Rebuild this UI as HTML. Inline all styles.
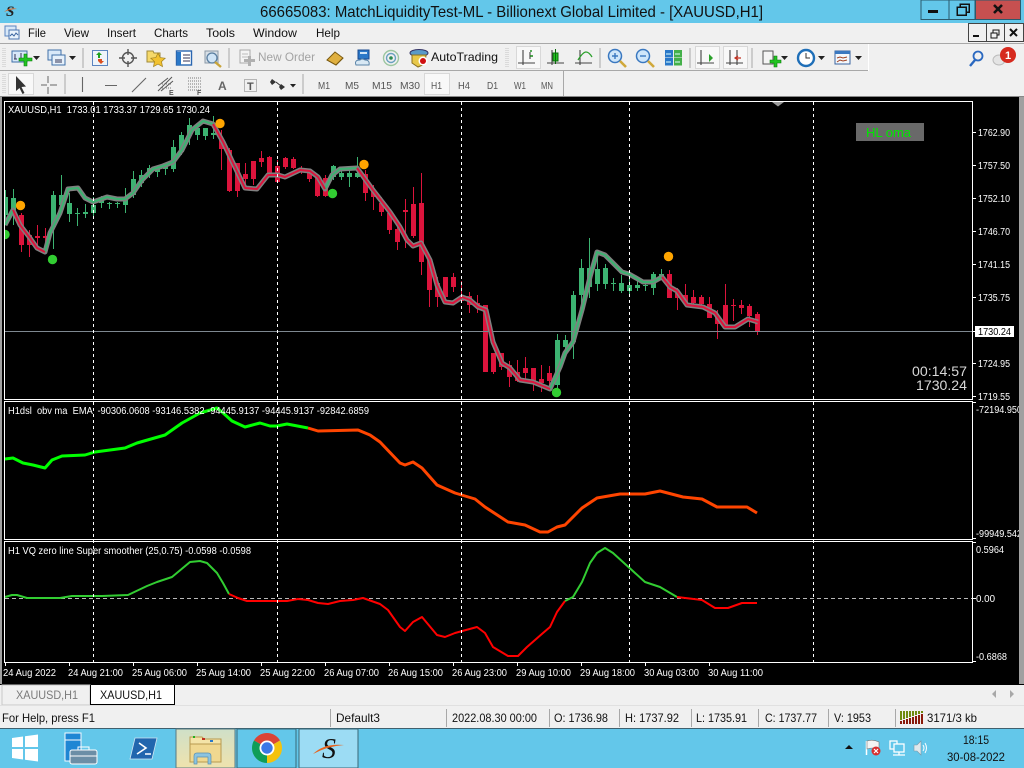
<!DOCTYPE html>
<html><head><meta charset="utf-8"><title>MT4</title>
<style>
html,body{margin:0;padding:0;background:#f0f0f0;overflow:hidden}
svg{display:block}
text{font-family:"Liberation Sans",sans-serif;font-size:11px;white-space:pre}
.w text{fill:#fff;font-size:10px}
.k text{fill:#111;font-size:12px}
.tf text{fill:#555;font-size:10.5px}
.c{shape-rendering:crispEdges}
</style></head><body>
<svg width="1024" height="768" viewBox="0 0 1024 768" xmlns="http://www.w3.org/2000/svg">
<defs><clipPath id="cl"><rect x="5" y="102" width="967" height="297"/></clipPath>
<linearGradient id="fg" x1="0" y1="0" x2="0" y2="1"><stop offset="0" stop-color="#cfe0c8"/><stop offset="1" stop-color="#efe2ad"/></linearGradient></defs>

<!-- backgrounds -->
<rect width="1024" height="768" fill="#f0f0f0"/>
<rect width="1024" height="23" fill="#63c7ea"/>
<rect x="0" y="97" width="1024" height="587" fill="#000"/>
<rect x="0" y="97" width="2" height="588" fill="#a0a0a0"/>
<rect x="1019" y="97" width="5" height="588" fill="#a0a0a0"/>

<!-- title bar -->
<text x="260" y="17" textLength="503" lengthAdjust="spacingAndGlyphs" style="font-size:16px" fill="#111">66665083: MatchLiquidityTest-ML - Billionext Global Limited - [XAUUSD,H1]</text>
<text x="6" y="16" style="font-family:'Liberation Serif',serif;font-size:15px;font-style:italic;font-weight:bold" fill="#222">S</text>
<path d="M4 12Q10 7 17 9Q10 9 4 12z" fill="#e8641e"/>
<g class="c">
<rect x="921" y="0" width="28" height="19.5" fill="#63c7ea" stroke="#2b5a6c"/>
<rect x="949" y="0" width="26" height="19.5" fill="#63c7ea" stroke="#2b5a6c"/>
<rect x="975.5" y="0" width="45" height="19.5" fill="#c75050" stroke="#2b5a6c"/>
<rect x="928" y="10" width="10" height="3" fill="#111"/>
<rect x="960" y="4" width="9" height="8" fill="none" stroke="#111" stroke-width="1.5"/>
<rect x="957" y="7" width="9" height="8" fill="#63c7ea" stroke="#111" stroke-width="1.5"/>
</g>
<path d="M994 5l8 8M1002 5l-8 8" stroke="#111" stroke-width="2.6"/>

<!-- menu -->
<g>
<rect x="5" y="26" width="11" height="10" fill="#d8e8f8" stroke="#5a84c0"/>
<rect x="9" y="30" width="10" height="9" fill="#eaf3fc" stroke="#4a74b0"/>
<path d="M10 36l2-2 2 2 2-3 2 2" stroke="#3a64a0" fill="none"/>
</g>
<g class="k">
<text x="28" y="37" textLength="18" lengthAdjust="spacingAndGlyphs">File</text>
<text x="64" y="37" textLength="25" lengthAdjust="spacingAndGlyphs">View</text>
<text x="107" y="37" textLength="29" lengthAdjust="spacingAndGlyphs">Insert</text>
<text x="154" y="37" textLength="34" lengthAdjust="spacingAndGlyphs">Charts</text>
<text x="206" y="37" textLength="29" lengthAdjust="spacingAndGlyphs">Tools</text>
<text x="253" y="37" textLength="44" lengthAdjust="spacingAndGlyphs">Window</text>
<text x="316" y="37" textLength="24" lengthAdjust="spacingAndGlyphs">Help</text>
</g>
<g class="c">
<rect x="968.5" y="23.5" width="18" height="18" fill="#f0f0f0" stroke="#444"/>
<rect x="986.5" y="23.5" width="18" height="18" fill="#f0f0f0" stroke="#444"/>
<rect x="1004.5" y="23.5" width="19" height="18" fill="#f0f0f0" stroke="#444"/>
<rect x="973" y="35" width="6" height="2" fill="#111"/>
<rect x="993" y="30" width="6" height="5" fill="none" stroke="#111"/>
<rect x="991" y="33" width="6" height="5" fill="#f0f0f0" stroke="#111"/>
</g>
<path d="M1010 29l7 7M1017 29l-7 7" stroke="#111" stroke-width="2"/>

<!-- toolbar separators -->
<g class="c">
<rect x="0" y="43" width="1024" height="1" fill="#a8a8a8"/>
<rect x="0" y="70" width="868" height="1" fill="#a8a8a8"/>
<rect x="868" y="44" width="1" height="27" fill="#fff"/>
<rect x="563" y="71" width="1" height="26" fill="#a8a8a8"/>
<rect x="0" y="96" width="1024" height="1" fill="#888"/>
<path d="M83 48v20M229 48v20M600 48v20M690 48v20M752 48v20M65 74v20M303 74v20" stroke="#a8a8a8"/>
<path d="M506 48v20M508 48v20M3 48v20M5 48v20M3 74v20M5 74v20" stroke="#c4c4c4" stroke-dasharray="1 1"/>
<g fill="#f8f8f8" stroke="#d8d8d8">
<rect x="516.5" y="46.5" width="24" height="22"/><rect x="695.5" y="46.5" width="24" height="22"/><rect x="723.5" y="46.5" width="24" height="22"/>
<rect x="8.5" y="73.5" width="25" height="21"/><rect x="424.5" y="73.5" width="25" height="21"/>
</g>
</g>

<!-- toolbar 1 icons -->
<rect x="12" y="51" width="15" height="11" fill="#d8e8f8" stroke="#3f6fa8"/>
<path d="M15 54v5M14 59h3M21 53v6" stroke="#335" fill="none"/>
<path d="M20 55h5v-4h3v4h5v3h-5v5h-3v-5h-5z" transform="translate(-1,3)" fill="#22c422" stroke="#0a7a0a" stroke-width=".6"/>
<path d="M33 56h7l-3.5 4z" fill="#222"/>
<rect x="48" y="50" width="13" height="10" fill="#d8e8f8" stroke="#3f6fa8"/>
<rect x="52" y="55" width="13" height="10" fill="#e6f0fa" stroke="#3f6fa8"/>
<path d="M55 60h7M55 62h7" stroke="#335"/>
<path d="M69 56h7l-3.5 4z" fill="#222"/>
<rect x="92.5" y="50.5" width="15" height="15" fill="#eef4fa" stroke="#5a84c0"/>
<path d="M96 55l3-3 3 3h-2v3h-2v-3z" fill="#1ea01e"/><path d="M98 59h4v2h2l-3 3-3-3h0z" fill="#dc5020"/>
<g fill="none" stroke="#555" stroke-width="1.4"><circle cx="128" cy="58" r="5.5"/><path d="M128 49v6M128 61v6M119 58h6M131 58h6"/></g>
<path d="M147 51h6l1 2h6v9h-13z" fill="#f6d96a" stroke="#a08a3a"/>
<path d="M158 53l2.2 4.6 5 .6-3.7 3.400 1 5-4.500-2.500-4.500 2.500 1-5-3.700-3.400 5-.6z" fill="#f2c230" stroke="#a08020" stroke-width=".7"/>
<rect x="176.5" y="51" width="15" height="14" fill="#fff" stroke="#2a66b0" stroke-width="1.4"/><rect x="177" y="52" width="4" height="13" fill="#2a78c8"/><path d="M183 55h7M183 58h7M183 61h7" stroke="#335"/>
<rect x="205" y="51" width="13" height="12" fill="#d8dfe6" stroke="#8a98a6"/>
<circle cx="212" cy="58" r="5" fill="#cfe4f6" stroke="#5a7ea0" stroke-width="1.3"/><path d="M215 62l6 5" stroke="#c9a43a" stroke-width="2.4"/>
<rect x="240" y="50" width="10" height="13" fill="#f4f4f4" stroke="#aaa"/><path d="M242 54h6M242 57h6" stroke="#bbb"/><path d="M244 59h4v-3h3v3h4v3h-4v4h-3v-4h-4z" fill="#b0b0b0"/>
<text x="258" y="61" textLength="57" lengthAdjust="spacingAndGlyphs" style="font-size:12px" fill="#a3a3a3">New Order</text>
<path d="M327 60l8-8 8 6-7 7z" fill="#e0b040" stroke="#7a5a10"/><path d="M327 60l9 5 7-7" fill="none" stroke="#7a5a10"/>
<rect x="358" y="50" width="11" height="9" fill="#2a78c8" stroke="#1a4a90"/><rect x="360" y="52" width="7" height="2" fill="#cfe4f6"/>
<path d="M356 65q-2-5 4-5q2-2 5 0q5 0 4 5z" fill="#d8e8f4" stroke="#5a84a8"/>
<g fill="none"><circle cx="391" cy="58" r="7.500" stroke="#9cc6a0" stroke-width="1.400"/><circle cx="391" cy="58" r="4.500" stroke="#6aa0c0" stroke-width="1.400"/></g><circle cx="391" cy="58" r="1.800" fill="#2a8a50"/>
<ellipse cx="419" cy="53" rx="9" ry="3.500" fill="#5a9ac8" stroke="#336"/>
<path d="M412 55h14l-1 9-7 3-6-4z" fill="#e8c84a" stroke="#8a7020"/>
<circle cx="423" cy="61" r="4.500" fill="#fff"/><circle cx="423" cy="61" r="3" fill="#d01010"/>
<text x="431" y="61" textLength="67" lengthAdjust="spacingAndGlyphs" style="font-size:12px" fill="#111">AutoTrading</text>
<g fill="none" stroke="#444" stroke-width="1.100">
<path d="M523 50v15M518 63h17M530 52v7"/><path d="M552 50v15M547 63h17"/><path d="M580 50v15M575 63h17"/>
<path d="M701 50v15M697 63h17"/><path d="M730 50v15M726 63h17"/><path d="M737 50v15"/>
</g>
<path d="M530 56h3M531 52v-2" stroke="#1a8a1a" fill="none" stroke-width="1.400"/>
<rect x="553" y="53" width="5" height="8" fill="#22c422" stroke="#0a6a0a"/><path d="M555.500 49v15" stroke="#0a6a0a"/>
<path d="M578 60q5-8 8-8t6 5" fill="none" stroke="#2aa02a" stroke-width="1.300"/>
<path d="M709 54l4 4-4 4z" fill="#2aa02a"/><path d="M741 58h-5M738 56l-3 2 3 2" stroke="#c03020" fill="none" stroke-width="1.200"/>
<circle cx="615" cy="56" r="6.500" fill="#cfe6fa" stroke="#3a78c0" stroke-width="1.500"/><path d="M612 56h6M615 53v6" stroke="#3a78c0" stroke-width="1.400"/><path d="M620 61l6 6" stroke="#d0a83a" stroke-width="2.600"/>
<circle cx="643" cy="56" r="6.500" fill="#cfe6fa" stroke="#3a78c0" stroke-width="1.500"/><path d="M640 56h6" stroke="#3a78c0" stroke-width="1.400"/><path d="M648 61l6 6" stroke="#d0a83a" stroke-width="2.600"/>
<g class="c"><rect x="665" y="50" width="8" height="7.500" fill="#2a78c8"/><rect x="674" y="50" width="8" height="7.500" fill="#44b04a"/><rect x="665" y="58" width="8" height="7.500" fill="#2a78c8"/><rect x="674" y="58" width="8" height="7.500" fill="#44b04a"/><path d="M666 54h5M675 54h5M666 62h5M675 62h5" stroke="#dff"/></g>
<rect x="763" y="51" width="10" height="13" fill="#f4f4f4" stroke="#555"/><path d="M770 60h4v-4h3v4h4v3h-4v4h-3v-4h-4z" fill="#22c422" stroke="#0a7a0a" stroke-width=".6"/>
<path d="M781 56h7l-3.500 4z" fill="#222"/>
<circle cx="806" cy="58" r="8" fill="#fff" stroke="#1f6fb8" stroke-width="2.400"/><path d="M806 53v5h4" stroke="#333" fill="none"/>
<path d="M818 56h7l-3.500 4z" fill="#222"/>
<rect x="835" y="51" width="15" height="13" fill="#f4f8fc" stroke="#3a64a0"/><rect x="835" y="51" width="15" height="3" fill="#3a78c0"/><path d="M837 58l3-1 3 1 4-1M837 62l3-2 3 1 4-1" stroke="#a04020" fill="none"/>
<path d="M855 56h7l-3.500 4z" fill="#222"/>
<circle cx="978" cy="56" r="4.500" fill="none" stroke="#2a68c0" stroke-width="1.800"/><path d="M975 60l-5 6" stroke="#2a68c0" stroke-width="2.400"/>
<ellipse cx="999" cy="60" rx="6" ry="5" fill="#e4e4e4" stroke="#bbb"/>
<circle cx="1008" cy="55" r="8" fill="#d62a1e"/><text x="1005" y="59" style="font-size:11px;font-weight:bold" fill="#fff">1</text>

<!-- toolbar 2 icons -->
<path d="M16 76v15l3.500-3 3 6 2-1-3-6 4.500-.5z" fill="#333"/>
<path d="M48 76v7M48 87v7M41 85h6M50 85h7" stroke="#666" stroke-width="1"/>
<path d="M82.500 77v15M105 85.500h12M132 92l14-14" stroke="#666" stroke-width="1.100" fill="none"/>
<path d="M158 91l14-14M161 91l12-10M158 86l10-8" stroke="#555" fill="none"/>
<path d="M160 84h12M160 88h12" stroke="#777" stroke-dasharray="1 1"/><text x="169" y="95" style="font-size:7px;font-weight:bold" fill="#555">E</text>
<path d="M188 78h13M188 81h13M188 84h13M188 87h13M188 90h13" stroke="#777" stroke-dasharray="1 1"/><text x="197" y="95" style="font-size:7px;font-weight:bold" fill="#555">F</text>
<text x="218" y="90" style="font-size:12px;font-weight:bold" fill="#666">A</text>
<rect x="244.500" y="79.500" width="12" height="12" fill="none" stroke="#777" stroke-dasharray="1 1"/><text x="247" y="90" style="font-size:11px;font-weight:bold" fill="#555">T</text>
<path d="M272 79l4 3-4 3-2-3zM281 84l4 3-4 3-2-3z" fill="#333"/><path d="M276 82l5 4" stroke="#333"/>
<path d="M290 84h6l-3 3.500z" fill="#222"/>
<g class="tf">
<text x="318" y="89" textLength="12" lengthAdjust="spacingAndGlyphs">M1</text><text x="345" y="89" textLength="14" lengthAdjust="spacingAndGlyphs">M5</text><text x="372" y="89" textLength="20" lengthAdjust="spacingAndGlyphs">M15</text><text x="400" y="89" textLength="20" lengthAdjust="spacingAndGlyphs">M30</text>
<text x="431" y="89" textLength="11" lengthAdjust="spacingAndGlyphs">H1</text><text x="458" y="89" textLength="12" lengthAdjust="spacingAndGlyphs">H4</text><text x="487" y="89" textLength="11" lengthAdjust="spacingAndGlyphs">D1</text><text x="514" y="89" textLength="12" lengthAdjust="spacingAndGlyphs">W1</text><text x="541" y="89" textLength="12" lengthAdjust="spacingAndGlyphs">MN</text>
</g>

<!-- candles -->
<g clip-path="url(#cl)" class="c">
<path stroke="#3cb371" stroke-width="1" fill="none" d="M5.500 190V220M13.500 189V225M53.500 191V249M61.500 175V210M69.500 193V222M77.500 208V226M85.500 204V218M93.500 197V217M101.500 196V208M109.500 202V209M117.500 202V208M125.500 188V213M133.500 171V198M141.500 170V187M149.500 165V178M157.500 167V177M165.500 163V175M173.500 140V172M181.500 132V155M189.500 118V145M197.500 123V140M205.500 128V140M213.500 116V139M333.500 165V180M341.500 170V180M349.500 168V187M357.500 157V178M557.500 334V390M565.500 335V357M573.500 291V359M581.500 259V307M589.500 238V298M597.500 252V291M605.500 264V289M613.500 278V291M621.500 275V293M629.500 270V297M637.500 280V291M645.500 280V291M653.500 272V295M661.500 269V280"/>
<path fill="#3cb371" d="M5 197h3v18h-3zM11 198h5v12h-5zM51 195h5v32h-5zM59 195h5v10h-5zM67 203h5v11h-5zM75 213h5v1h-5zM83 212h5v2h-5zM91 205h5v8h-5zM99 198h5v5h-5zM107 203h5v1h-5zM115 203h5v1h-5zM123 200h5v5h-5zM131 179h5v16h-5zM139 175h5v8h-5zM147 168h5v4h-5zM155 169h5v3h-5zM163 166h5v3h-5zM171 147h5v22h-5zM179 135h5v17h-5zM187 125h5v10h-5zM195 128h5v7h-5zM203 128h5v8h-5zM211 133h5v2h-5zM331 166h5v11h-5zM339 173h5v4h-5zM347 173h5v4h-5zM355 173h5v4h-5zM555 340h5v45h-5zM563 340h5v7h-5zM571 295h5v47h-5zM579 268h5v27h-5zM587 268h5v19h-5zM595 269h5v15h-5zM603 268h5v16h-5zM611 283h5v1h-5zM619 283h5v8h-5zM627 285h5v6h-5zM635 285h5v3h-5zM643 285h5v1h-5zM651 274h5v14h-5zM659 274h5v6h-5z"/>
<path stroke="#dc143c" stroke-width="1" fill="none" d="M21.500 213V252M29.500 230V257M37.500 225V247M45.500 228V250M221.500 130V170M229.500 148V192M237.500 163V197M245.500 163V185M253.500 161V185M261.500 151V167M269.500 156V175M277.500 160V182M285.500 157V169M293.500 157V169M301.500 166V174M309.500 170V182M317.500 175V197M325.500 175V197M365.500 170V201M373.500 185V210M381.500 197V216M389.500 210V234M397.500 222V250M405.500 199V248M413.500 187V238M421.500 173V275M429.500 255V307M437.500 277V307M445.500 277V299M453.500 273V292M461.500 281V303M469.500 292V313M477.500 295V313M485.500 305V372M493.500 353V374M501.500 353V370M509.500 361V387M517.500 360V382M525.500 357V382M533.500 368V391M541.500 365V392M549.500 366V387M669.500 270V298M677.500 288V310M685.500 284V304M693.500 290V305M701.500 295V305M709.500 297V318M717.500 310V339M725.500 284V325M733.500 299V321M741.500 300V314M749.500 304V327M757.500 312V335"/>
<path fill="#dc143c" d="M19 215h5v30h-5zM27 235h5v10h-5zM35 236h5v2h-5zM43 236h5v2h-5zM219 140h5v9h-5zM227 150h5v41h-5zM235 163h5v28h-5zM243 174h5v5h-5zM251 161h5v18h-5zM259 158h5v4h-5zM267 157h5v16h-5zM275 166h5v16h-5zM283 158h5v9h-5zM291 159h5v9h-5zM299 168h5v4h-5zM307 173h5v6h-5zM315 177h5v19h-5zM323 178h5v18h-5zM363 174h5v19h-5zM371 190h5v7h-5zM379 203h5v9h-5zM387 213h5v17h-5zM395 229h5v13h-5zM403 210h5v2h-5zM411 204h5v32h-5zM419 203h5v59h-5zM427 260h5v30h-5zM435 283h5v14h-5zM443 277h5v20h-5zM451 277h5v10h-5zM459 297h5v4h-5zM467 296h5v9h-5zM475 303h5v3h-5zM483 305h5v67h-5zM491 353h5v19h-5zM499 353h5v14h-5zM507 365h5v12h-5zM515 372h5v9h-5zM523 368h5v5h-5zM531 368h5v14h-5zM539 379h5v4h-5zM547 373h5v8h-5zM667 274h5v24h-5zM675 293h5v5h-5zM683 295h5v7h-5zM691 297h5v6h-5zM699 297h5v7h-5zM707 304h5v14h-5zM715 317h5v7h-5zM723 305h5v20h-5zM731 305h5v1h-5zM739 305h5v3h-5zM747 306h5v10h-5zM755 314h5v18h-5z"/>
</g>
<rect x="5" y="331" width="967" height="1" fill="#7e8890"/>
<!-- moving average -->
<g clip-path="url(#cl)" fill="none" stroke-linejoin="round">
<path stroke="#808080" stroke-width="5" d="M5 225L13 210L20 225L30 238L37 248L45 252L50 233L60 213L68 189L78 188L85 198L93 202L107 197L117 199L125 199L133 193L142 180L153 169L163 166L173 162L182 150L192 130L203 121L213 124L223 142L233 163L245 188L257 189L268 175L278 175L285 177L300 170L310 171L318 177L325 189L332 175L340 169L357 168L373 190L390 212L400 227L407 240L413 246L421 243L430 260L437 285L445 302L453 303L462 297L470 300L478 307L486 310L493 342L502 363L510 368L520 380L533 382L550 389L560 367L565 353L573 342L582 310L590 277L597 252L605 255L622 272L629 274L643 282L653 282L662 277L670 287L677 291L687 305L703 307L715 313L725 327L735 327L748 319L758 322"/>
<path stroke="#3cb371" stroke-width="2" d="M5 225L13 210M45 252L50 233L60 213L68 189L78 188L85 198L93 202L107 197L117 199L125 199L133 193L142 180L153 169L163 166L173 162L182 150L192 130L203 121L213 124M325 189L332 175L340 169L357 168M550 389L560 367L565 353L573 342L582 310L590 277L597 252L605 255L622 272L629 274L643 282L653 282L662 277"/>
<path stroke="#dc143c" stroke-width="2" d="M13 210L20 225L30 238L37 248L45 252M213 124L223 142L233 163L245 188L257 189L268 175L278 175L285 177L300 170L310 171L318 177L325 189M357 168L373 190L390 212L400 227L407 240L413 246L421 243L430 260L437 285L445 302L453 303L462 297L470 300L478 307L486 310L493 342L502 363L510 368L520 380L533 382L550 389M662 277L670 287L677 291L687 305L703 307L715 313L725 327L735 327L748 319L758 322"/>
<g fill="#ffa500"><circle cx="20.500" cy="205.500" r="4.700"/><circle cx="220" cy="123.500" r="4.700"/><circle cx="364" cy="164.500" r="4.700"/><circle cx="668.500" cy="256.500" r="4.700"/></g>
<g fill="#32cd32"><circle cx="5" cy="234.500" r="4.700"/><circle cx="52.500" cy="259.500" r="4.700"/><circle cx="332.500" cy="193.500" r="4.700"/><circle cx="556.500" cy="392.500" r="4.700"/></g>
</g>

<!-- OBV indicator -->
<g fill="none" stroke-width="3" stroke-linejoin="round">
<path stroke="#00ff00" d="M5 459L13 458L23 463L33 465L45 468L52 460L62 456L85 455L95 452L125 448L137 443L165 435L182 423L200 413L217 408L222 412L232 421L245 427L260 423L270 426L277 426L287 424L308 428"/>
<path stroke="#ff4500" d="M308 428L318 431L358 430L370 435L380 442L400 463L405 465L413 462L422 468L437 485L455 493L475 499L485 507L508 522L525 525L540 532L548 532L557 527L565 525L582 508L597 498L620 494L645 494L660 491L683 497L702 499L717 507L747 507L757 513"/>
</g>
<!-- VQ indicator -->
<path d="M5 598.500H972" stroke="#b8b8b8" stroke-dasharray="4 3" class="c"/>
<g fill="none" stroke-width="2" stroke-linejoin="round">
<path stroke="#32cd32" d="M5 597L12 595L17 595L27 598L60 598L72 596L102 596L128 595L147 586L157 582L172 577L190 562L200 561L207 563L217 573L223 583L229 594M565 601L573 597L582 582L590 563L597 553L605 548L613 553L645 582L660 587L677 597"/>
<path stroke="#ff0000" d="M229 594L238 598L247 601L287 601L298 599L308 600L318 603L328 604L340 601L353 600L363 598L380 604L388 610L400 627L405 631L413 622L422 617L437 635L445 637L455 633L477 627L485 633L493 647L508 656L518 656L527 647L543 633L550 627L557 612L565 601M677 597L702 600L715 608L728 608L742 603L757 603"/>
</g>

<!-- dashed grid -->
<path class="c" d="M93.500 102V662M277.500 102V662M461.500 102V662M629.500 102V662M813.500 102V662" stroke="#fff" stroke-dasharray="3 3"/>

<!-- frames -->
<g class="c" fill="none" stroke="#fff">
<rect x="4.500" y="101.500" width="968" height="298"/>
<rect x="4.500" y="401.500" width="968" height="138"/>
<rect x="4.500" y="541.500" width="968" height="121"/>
<path d="M973 132.500h3M973 165.500h3M973 198.500h3M973 231.500h3M973 264.500h3M973 297.500h3M973 331.500h3M973 363.500h3M973 396.500h3M973 402.500h3M973 538.500h3M973 542.500h3M973 598.500h3M973 661.500h3"/>
<path d="M5.500 663v3M69.500 663v3M133.500 663v3M197.500 663v3M261.500 663v3M325.500 663v3M389.500 663v3M453.500 663v3M517.500 663v3M581.500 663v3M645.500 663v3M709.500 663v3"/>
</g>
<path d="M772 102h12l-6 4.500z" fill="#9a9a9a"/>

<!-- panel labels -->
<g class="w">
<text x="8" y="113" textLength="202" lengthAdjust="spacingAndGlyphs">XAUUSD,H1  1733.01 1733.37 1729.65 1730.24</text>
<text x="8" y="414" textLength="361" lengthAdjust="spacingAndGlyphs">H1dsl  obv ma  EMA  -90306.0608 -93146.5382 -94445.9137 -94445.9137 -92842.6859</text>
<text x="8" y="554" textLength="243" lengthAdjust="spacingAndGlyphs">H1 VQ zero line Super smoother (25,0.75) -0.0598 -0.0598</text>
<text x="978" y="136" textLength="32" lengthAdjust="spacingAndGlyphs">1762.90</text>
<text x="978" y="169" textLength="32" lengthAdjust="spacingAndGlyphs">1757.50</text>
<text x="978" y="202" textLength="32" lengthAdjust="spacingAndGlyphs">1752.10</text>
<text x="978" y="235" textLength="32" lengthAdjust="spacingAndGlyphs">1746.70</text>
<text x="978" y="268" textLength="32" lengthAdjust="spacingAndGlyphs">1741.15</text>
<text x="978" y="301" textLength="32" lengthAdjust="spacingAndGlyphs">1735.75</text>
<text x="978" y="367" textLength="32" lengthAdjust="spacingAndGlyphs">1724.95</text>
<text x="978" y="400" textLength="32" lengthAdjust="spacingAndGlyphs">1719.55</text>
<text x="976" y="413" textLength="46" lengthAdjust="spacingAndGlyphs">-72194.950</text>
<text x="976" y="537" textLength="46" lengthAdjust="spacingAndGlyphs">-99949.542</text>
<text x="976" y="553" textLength="28" lengthAdjust="spacingAndGlyphs">0.5964</text>
<text x="976" y="602" textLength="19" lengthAdjust="spacingAndGlyphs">0.00</text>
<text x="976" y="660" textLength="31" lengthAdjust="spacingAndGlyphs">-0.6868</text>
<text x="3" y="676" textLength="53" lengthAdjust="spacingAndGlyphs">24 Aug 2022</text>
<text x="68" y="676" textLength="55" lengthAdjust="spacingAndGlyphs">24 Aug 21:00</text>
<text x="132" y="676" textLength="55" lengthAdjust="spacingAndGlyphs">25 Aug 06:00</text>
<text x="196" y="676" textLength="55" lengthAdjust="spacingAndGlyphs">25 Aug 14:00</text>
<text x="260" y="676" textLength="55" lengthAdjust="spacingAndGlyphs">25 Aug 22:00</text>
<text x="324" y="676" textLength="55" lengthAdjust="spacingAndGlyphs">26 Aug 07:00</text>
<text x="388" y="676" textLength="55" lengthAdjust="spacingAndGlyphs">26 Aug 15:00</text>
<text x="452" y="676" textLength="55" lengthAdjust="spacingAndGlyphs">26 Aug 23:00</text>
<text x="516" y="676" textLength="55" lengthAdjust="spacingAndGlyphs">29 Aug 10:00</text>
<text x="580" y="676" textLength="55" lengthAdjust="spacingAndGlyphs">29 Aug 18:00</text>
<text x="644" y="676" textLength="55" lengthAdjust="spacingAndGlyphs">30 Aug 03:00</text>
<text x="708" y="676" textLength="55" lengthAdjust="spacingAndGlyphs">30 Aug 11:00</text>
</g>
<rect x="1019" y="400" width="5" height="285" fill="#a0a0a0"/>
<rect x="975" y="326" width="39" height="11" fill="#fff"/>
<text x="978" y="335" textLength="33" lengthAdjust="spacingAndGlyphs" style="font-size:10px" fill="#000">1730.24</text>
<rect x="856" y="123" width="68" height="18" fill="#696969"/>
<text x="866" y="137" textLength="45" lengthAdjust="spacingAndGlyphs" style="font-size:13px" fill="#00e800">HL oma</text>
<text x="912" y="376" textLength="55" lengthAdjust="spacingAndGlyphs" style="font-size:14px" fill="#d8d8d8">00:14:57</text>
<text x="916" y="390" textLength="51" lengthAdjust="spacingAndGlyphs" style="font-size:14px" fill="#d8d8d8">1730.24</text>

<!-- tabs -->
<rect x="0" y="684" width="1024" height="22" fill="#f0f0f0"/>
<rect x="0" y="684" width="1024" height="1" fill="#000"/>
<g class="c">
<rect x="2" y="685" width="88" height="20" fill="#f0f0f0" stroke="#c8c8c8"/>
<path d="M90.500 685v19.500H174.500V685" fill="#fff" stroke="#000"/>
<rect x="0" y="705" width="1024" height="1" fill="#e0e0e0"/>
</g>
<text x="16" y="699" textLength="62" lengthAdjust="spacingAndGlyphs" style="font-size:12px" fill="#7a7a7a">XAUUSD,H1</text>
<text x="100" y="699" textLength="62" lengthAdjust="spacingAndGlyphs" style="font-size:12px" fill="#111">XAUUSD,H1</text>
<path d="M996 690v8l-4-4zM1010 690v8l4-4z" fill="#a8a8a8"/>

<!-- status bar -->
<g class="c"><path d="M330.500 709v18M446.500 709v18M549.500 709v18M619.500 709v18M691.500 709v18M758.500 709v18M828.500 709v18M895.500 709v18" stroke="#a8a8a8"/></g>
<g class="k">
<text x="2" y="722" textLength="93" lengthAdjust="spacingAndGlyphs">For Help, press F1</text>
<text x="336" y="722" textLength="44" lengthAdjust="spacingAndGlyphs">Default3</text>
<text x="452" y="722" textLength="85" lengthAdjust="spacingAndGlyphs">2022.08.30 00:00</text>
<text x="554" y="722" textLength="54" lengthAdjust="spacingAndGlyphs">O: 1736.98</text>
<text x="625" y="722" textLength="54" lengthAdjust="spacingAndGlyphs">H: 1737.92</text>
<text x="696" y="722" textLength="51" lengthAdjust="spacingAndGlyphs">L: 1735.91</text>
<text x="765" y="722" textLength="52" lengthAdjust="spacingAndGlyphs">C: 1737.77</text>
<text x="834" y="722" textLength="37" lengthAdjust="spacingAndGlyphs">V: 1953</text>
<text x="927" y="722" textLength="50" lengthAdjust="spacingAndGlyphs">3171/3 kb</text>
</g>
<g class="c" stroke-width="2" fill="none">
<path stroke="#6f8a10" d="M901 711v9M904 711v8M907 711v7M910 711v6M913 711v5M916 711v4M919 711v3M922 711v2"/>
<path stroke="#8a1a0a" d="M901 721v3M904 720v4M907 719v5M910 718v6M913 717v7M916 716v8M919 715v9M922 714v10"/>
</g>

<!-- taskbar -->
<rect x="0" y="728" width="1024" height="40" fill="#63c7ea"/>
<rect x="0" y="728" width="1024" height="1" fill="#40606e"/>
<path d="M12 738l11-1.500V747H12zM25 736.200L38 734.500V747H25zM12 749h11v10.500L12 758zM25 749h13v12.500L25 759.700z" fill="#fff"/>
<rect x="65" y="733" width="16" height="28" fill="#1f86d4" stroke="#f4fafd"/><path d="M65 740h16" stroke="#fff"/>
<rect x="70" y="750" width="27" height="14" rx="2" fill="#6c8ea6" stroke="#fff"/><path d="M78 750v-3h11v3M70 756h27" stroke="#fff" fill="none"/>
<path d="M135 738h22l-5 21h-22z" fill="#2166ae" stroke="#cfe4f2" stroke-width=".8"/><path d="M139 743l7 5-9 6M145 754h6" stroke="#fff" stroke-width="1.600" fill="none"/>
<g class="c">
<rect x="176" y="729" width="59" height="39" fill="url(#fg)" stroke="#5a7a82"/>
<rect x="237" y="729" width="59" height="39" fill="#63c7ea" stroke="#3a6878"/>
<rect x="299" y="729" width="59" height="39" fill="#9cdcf4" stroke="#3a6878"/>
</g>
<path d="M190 737h12l2 2h17v7h-31z" fill="#f4e4a8" stroke="#b89a50"/>
<rect x="193" y="736" width="2" height="2" fill="#20b020"/><rect x="202" y="738" width="3" height="2" fill="#c03020"/><rect x="210" y="740" width="3" height="2" fill="#2a78c8"/>
<path d="M190 744h31v18h-31z" fill="#f0d890" stroke="#b89a50"/>
<path d="M194 764v-8q0-3 3-3h11q3 0 3 3v8h-3v-7h-11v7z" fill="#8cc4e0" stroke="#5a90b0" stroke-width=".7"/>
<path d="M254 740.500A15 15 0 0 1 280 740.500L267 748Z" fill="#db4437"/>
<path d="M280 740.500A15 15 0 0 1 267 763L267 748Z" fill="#f4c20d"/>
<path d="M267 763A15 15 0 0 1 254 740.500L267 748Z" fill="#0f9d58"/>
<circle cx="267" cy="748" r="7.500" fill="#fff"/><circle cx="267" cy="748" r="5.700" fill="#3b78e7"/>
<text x="322" y="758" style="font-family:'Liberation Serif',serif;font-size:28px;font-style:italic" fill="#111">S</text>
<path d="M313 754Q324 743 344 745Q328 746 313 754z" fill="#e8641e"/>
<path d="M845 749h8l-4-4z" fill="#111"/>
<path d="M866.500 741v14" stroke="#fff" stroke-width="1.500"/><path d="M867 741q6-2 12 1v7q-6-2-12 0z" fill="#f4f4f4" stroke="#777" stroke-width=".6"/>
<circle cx="876" cy="751" r="4.500" fill="#d83030"/><path d="M874 749l4 4M878 749l-4 4" stroke="#fff" stroke-width="1.200"/>
<rect x="890" y="741" width="7" height="8" fill="none" stroke="#fff" stroke-width="1.300"/><rect x="894" y="744" width="10" height="8" fill="#63c7ea" stroke="#fff" stroke-width="1.300"/><path d="M893 755h12M899 752v3" stroke="#fff" stroke-width="1.300"/>
<path d="M914 745h3l4-4v14l-4-4h-3z" fill="#dfe8ec" stroke="#7a98a8" stroke-width=".6"/><path d="M923 745q2 3 0 6M925 743q3 5 0 10" stroke="#fff" fill="none"/>
<g class="k">
<text x="963" y="744" textLength="26" lengthAdjust="spacingAndGlyphs">18:15</text>
<text x="947" y="761" textLength="58" lengthAdjust="spacingAndGlyphs">30-08-2022</text>
</g>
</svg>
</body></html>
